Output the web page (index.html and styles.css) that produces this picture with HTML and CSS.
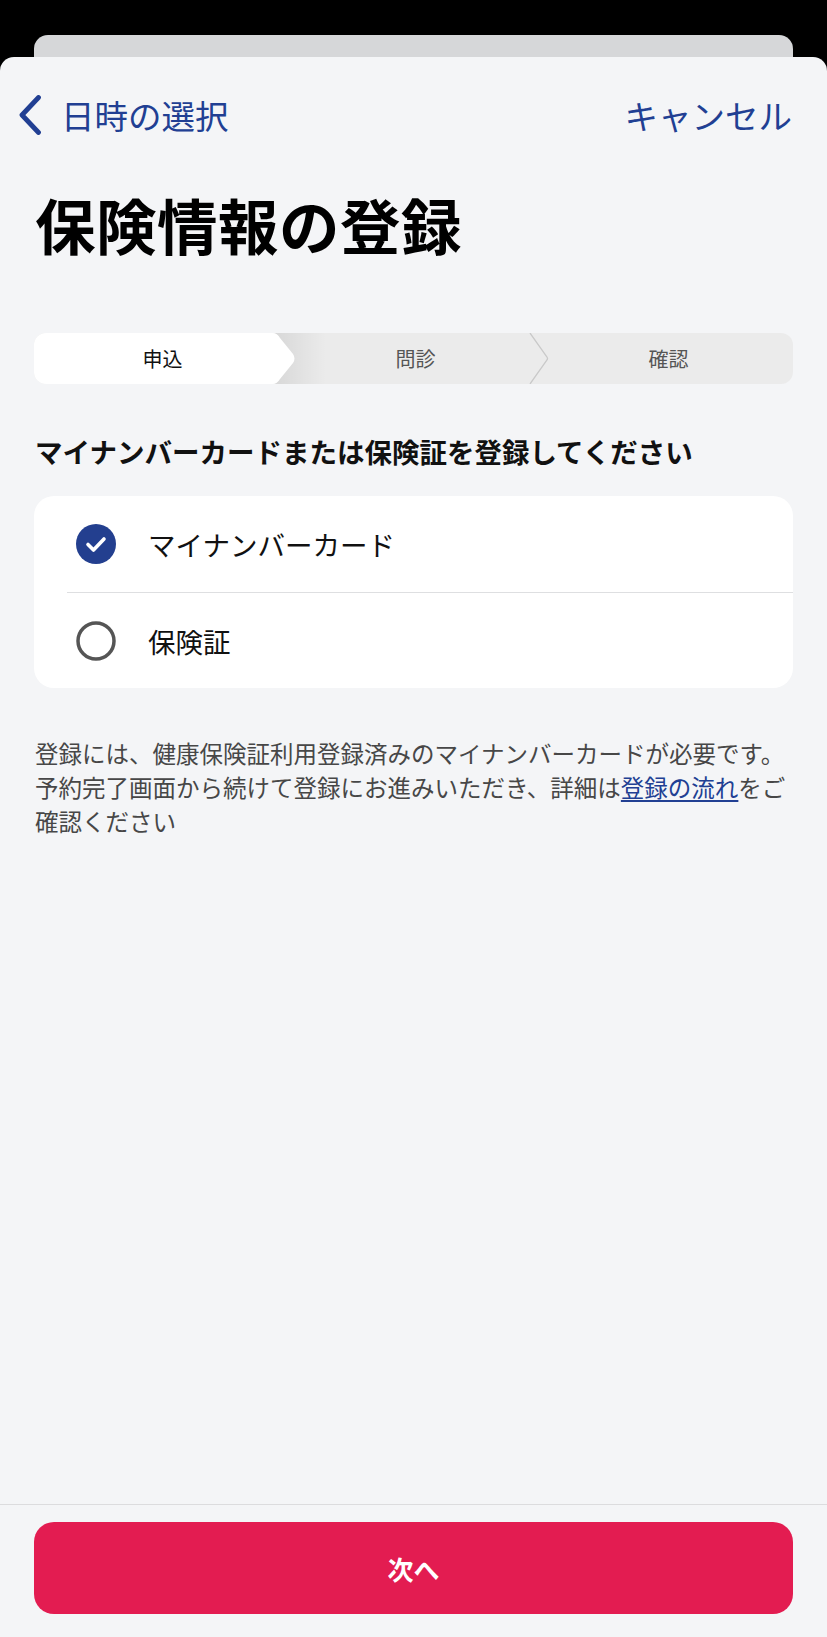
FILE: index.html
```html
<!DOCTYPE html>
<html lang="ja">
<head>
<meta charset="utf-8">
<title>保険情報の登録</title>
<link rel="stylesheet" href="styles.css">
</head>
<body>
<div class="screen">
  <div class="backcard"></div>
  <div class="sheet">
    <div class="content">
      <nav class="nav">
        <a class="back">
          <svg class="chev" width="26" height="40" viewBox="0 0 26 40"><path d="M21.5 2.5 L5 20 L21.5 37.5" fill="none" stroke="#213f93" stroke-width="4.8" stroke-linecap="round" stroke-linejoin="round"/></svg>
          <span>日時の選択</span>
        </a>
        <a class="cancel">キャンセル</a>
      </nav>
      <h1 class="title">保険情報の登録</h1>
      <div class="stepper">
        <svg class="stepper-bg" width="759" height="51" viewBox="0 0 759 51">
          <defs>
            <linearGradient id="sh" x1="0" x2="1" y1="0" y2="0">
              <stop offset="0" stop-color="#000" stop-opacity="0.09"/>
              <stop offset="1" stop-color="#000" stop-opacity="0"/>
            </linearGradient>
          </defs>
          <rect x="236" y="0" width="56" height="51" fill="url(#sh)"/>
          <path d="M0 0 H239 Q243 0 246 5 L259 21 Q262 25.5 259 30 L246 46 Q243 51 239 51 H0 Z" fill="#fff"/>
          <path d="M496 0 L513 24 Q514 25.5 513 27 L496 51" fill="none" stroke="#c9c9c9" stroke-width="1.3"/>
        </svg>
        <div class="step active">申込</div>
        <div class="step">問診</div>
        <div class="step">確認</div>
      </div>
      <h2 class="question">マイナンバーカードまたは保険証を登録してください</h2>
      <div class="options">
        <div class="option">
          <svg class="mark" width="40" height="40" viewBox="0 0 40 40"><circle cx="20" cy="20" r="20" fill="#233f8f"/><path d="M12 20.5 L17.5 26 L28 15" fill="none" stroke="#fff" stroke-width="3.6" stroke-linecap="round" stroke-linejoin="round"/></svg>
          <span class="label">マイナンバーカード</span>
        </div>
        <div class="option">
          <svg class="mark" width="40" height="40" viewBox="0 0 40 40"><circle cx="20" cy="20" r="18" fill="none" stroke="#555" stroke-width="3.5"/></svg>
          <span class="label">保険証</span>
        </div>
      </div>
      <p class="note">登録には、健康保険証利用登録済みのマイナンバーカードが必要です。<br>予約完了画面から続けて登録にお進みいただき、詳細は<a class="link">登録の流れ</a>をご確認ください</p>
    </div>
    <footer class="footer">
      <button class="next">次へ</button>
    </footer>
  </div>
</div>
</body>
</html>
```
FILE: styles.css
```css
* { box-sizing: border-box; }
html, body { margin: 0; padding: 0; }
body {
  background: #000;
  font-family: "Noto Sans CJK JP", "Noto Sans", sans-serif;
  width: 827px;
  height: 1637px;
  overflow: hidden;
}
.screen {
  display: flex;
  flex-direction: column;
  height: 1637px;
  padding-top: 35px;
}
.backcard {
  height: 22px;
  margin: 0 34px;
  background: #d6d7d9;
  border-radius: 14px 14px 0 0;
  flex: none;
}
.sheet {
  flex: 1;
  background: #f4f5f7;
  border-radius: 14px 14px 0 0;
  display: flex;
  flex-direction: column;
}
.content {
  flex: 1;
  padding: 0 34px;
}
.nav {
  display: flex;
  justify-content: space-between;
  align-items: center;
  height: 40px;
  margin-top: 38px;
  margin-left: -17px;
  margin-right: 1px;
  color: #213f93;
  font-size: 33.5px;
  line-height: 40px;
}
.back {
  display: flex;
  align-items: center;
  gap: 18px;
}
.chev { display: block; }
.title {
  margin: 59px 0 0 1px;
  font-size: 60.5px;
  line-height: 60px;
  font-weight: 700;
  color: #000;
  letter-spacing: 0.5px;
}
.stepper {
  position: relative;
  margin-top: 79px;
  height: 51px;
  border-radius: 12px;
  background: #ebebeb;
  overflow: hidden;
  display: grid;
  grid-template-columns: 1fr 1fr 1fr;
}
.stepper-bg {
  position: absolute;
  left: 0;
  top: 0;
}
.step {
  position: relative;
  display: flex;
  align-items: center;
  justify-content: center;
  font-size: 20px;
  color: #555;
  padding-left: 4px;
}
.step.active { color: #111; }
.question {
  margin: 54px 0 0 1px;
  font-size: 27.5px;
  line-height: 27px;
  font-weight: 700;
  color: #111;
}
.options {
  margin-top: 31px;
  background: #fff;
  border-radius: 20px;
}
.option {
  height: 96px;
  display: flex;
  align-items: center;
  padding-left: 42px;
  gap: 32px;
}
.option + .option {
  border-top: 1.5px solid #dedfe1;
  margin-left: 33px;
  padding-left: 9px;
}
.mark { display: block; flex: none; }
.label {
  font-size: 27.5px;
  color: #111;
}
.note {
  margin: 48px -4px 0 1px;
  font-size: 23.5px;
  line-height: 34px;
  color: #474747;
}
.link {
  color: #213f93;
  text-decoration: underline;
  text-underline-offset: 3px;
}
.footer {
  flex: none;
  border-top: 1.5px solid #dcdcde;
  padding: 17px 34px 23px;
}
.next {
  display: block;
  width: 100%;
  height: 92px;
  border: none;
  border-radius: 20px;
  background: #e31c51;
  color: #fff;
  font-family: "Noto Sans CJK JP", sans-serif;
  font-size: 26px;
  font-weight: 700;
}
```
